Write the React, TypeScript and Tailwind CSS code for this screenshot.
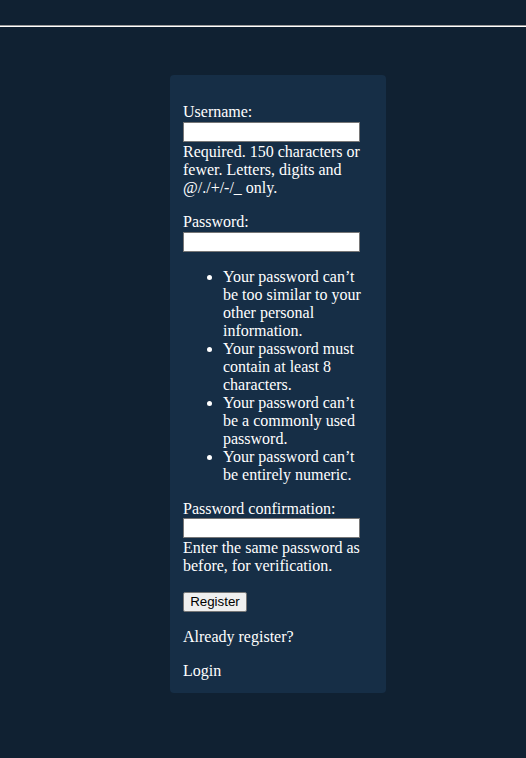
import React from 'react'

const rules = [
    "Your password can’t be too similar to your other personal information.",
    'Your password must contain at least 8 characters.',
    "Your password can’t be a commonly used password.",
    "Your password can’t be entirely numeric.",
]

function Field({ label, className = '' }: { label: string; className?: string }) {
    return (
        <div className={className}>
            <label className="block h-[18px]">{label}</label>
            <input
                type="text"
                className="block mt-[1px] w-[177px] h-[20px] bg-white border border-[#767676] outline-none"
            />
        </div>
    )
}

export default function App() {
    return (
        <div className="min-h-[758px] bg-[#102132] text-white font-['Liberation_Serif',serif] text-[16px] leading-[18px]">
            {/* top rule */}
            <div className="pt-[25px]">
                <div className="h-[2px] border-t border-t-[#9a9a9a] border-b border-b-white" />
            </div>

            <div className="flex justify-center pt-[48px] pl-[30px]">
                <div className="w-[216px] bg-[#162e46] rounded-[4px] pl-[13px] pr-[13px] pt-[28px] pb-[13px]">
                    <form onSubmit={e => e.preventDefault()}>
                        {/* Username */}
                        <Field label="Username:" />
                        <p className="mt-[1px]">
                            Required. 150 characters or fewer. Letters, digits and @/./+/-/_ only.
                        </p>

                        {/* Password */}
                        <Field label="Password:" className="mt-[16px]" />
                        <ul className="mt-[16px] pl-[40px] list-disc">
                            {rules.map(r => (
                                <li key={r}>{r}</li>
                            ))}
                        </ul>

                        {/* Confirmation */}
                        <div className="mt-[16px]">
                            <label className="block h-[18px]">Password confirmation:</label>
                            <input
                                type="password"
                                className="block w-[177px] h-[20px] bg-white border border-[#767676] outline-none"
                            />
                        </div>
                        <p className="mt-[1px]">Enter the same password as before, for verification.</p>

                        <button
                            type="submit"
                            className="block mt-[17px] h-[20px] w-[64px] bg-[#efefef] border border-[#767676] rounded-[2px] text-black font-['Liberation_Sans',sans-serif] text-[13.33px] leading-[16px]"
                        >
                            Register
                        </button>
                    </form>

                    <p className="mt-[16px]">Already register?</p>
                    <p className="mt-[16px]">
                        <a href="#">Login</a>
                    </p>
                </div>
            </div>
        </div>
    )
}
